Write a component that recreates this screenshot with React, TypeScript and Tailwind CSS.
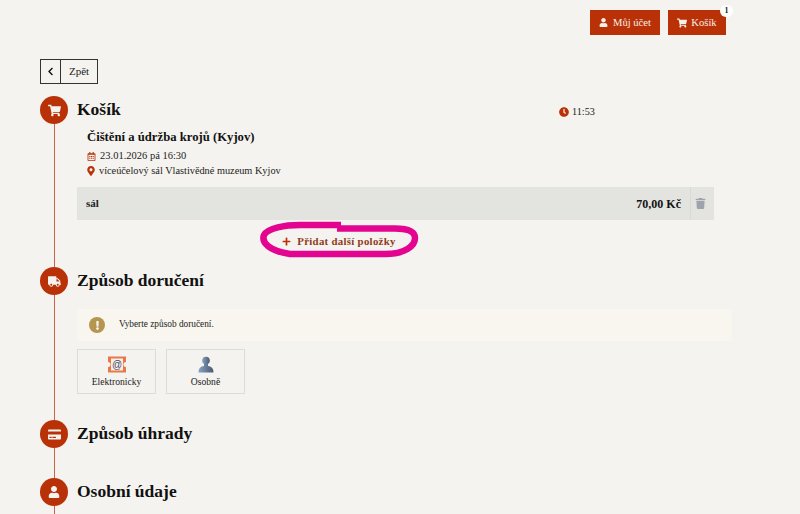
import React from "react";
import { FaUser, FaShoppingCart, FaChevronLeft, FaClock, FaRegCalendarAlt, FaMapMarkerAlt, FaTrash, FaPlus, FaTruck, FaCreditCard, FaExclamation } from "react-icons/fa";

const serif = "font-['Liberation_Serif',serif]";

function Circle({ children }: { children: React.ReactNode }) {
  return (
    <div className="flex h-[28px] w-[28px] shrink-0 items-center justify-center rounded-full bg-[#b93207] text-[#f5f3ef]">
      {children}
    </div>
  );
}

function Step({ icon, title, height, children }: { icon: React.ReactNode; title: string; height: string; children?: React.ReactNode }) {
  return (
    <section className={`flex gap-[9px] ${height}`}>
      <div className="flex w-[28px] shrink-0 flex-col items-center">
        <Circle>{icon}</Circle>
        <div className="w-px flex-1 bg-[#c8644a]" />
      </div>
      <div className="min-w-0 flex-1">
        <h2 className="h-[28px] text-[17.5px] font-bold leading-[27px] text-[#111]">{title}</h2>
        {children}
      </div>
    </section>
  );
}

function Choice({ label, icon }: { label: string; icon: React.ReactNode }) {
  return (
    <div className="flex h-[45px] w-[79px] flex-col items-center border border-[#dcdcd8] pt-[6px]">
      <div className="h-[17px]">{icon}</div>
      <div className="mt-[3px] text-[9.6px] leading-[12px] text-[#222]">{label}</div>
    </div>
  );
}

export default function App() {
  return (
    <div className={`relative h-[514px] w-[800px] overflow-hidden bg-[#f5f3ef] ${serif} text-[#222]`}>
      <header className="flex justify-end gap-[8px] pr-[74px] pt-[10px]">
        <button className="flex h-[25px] w-[70px] items-center justify-center gap-[5px] bg-[#b93207] text-[10.6px] text-[#f8efe8]">
          <FaUser size={9} /> Můj účet
        </button>
        <button className="relative flex h-[25px] w-[58px] items-center justify-center gap-[4px] bg-[#b93207] text-[10.6px] text-[#f8efe8]">
          <FaShoppingCart size={10} /> Košík
          <span className="absolute -right-[7px] -top-[5px] flex h-[12px] w-[13px] items-center justify-center rounded-full bg-white text-[8px] font-bold text-[#222]">1</span>
        </button>
      </header>

      <main className="pl-[40px] pt-[24px]">
        <div className="flex h-[25px] w-[58px] border border-[#333] text-[11px]">
          <div className="flex w-[20px] items-center justify-center border-r border-[#333]">
            <FaChevronLeft size={9} className="text-[#111]" />
          </div>
          <div className="flex flex-1 items-center justify-center">Zpět</div>
        </div>

        <div className="mt-[12px] w-[692px]">
          <Step icon={<FaShoppingCart size={13} />} title="Košík" height="h-[171px]">
            <div className="relative">
              <div className="absolute -top-[24px] left-[482px] flex items-center gap-[3px] text-[10.2px] leading-[14px]">
                <FaClock size={10} className="text-[#b93207]" /> 11:53
              </div>
              <h3 className="ml-[10px] mt-[5px] text-[12.7px] font-bold leading-[16px] text-[#111]">Čištění a údržba krojů (Kyjov)</h3>
              <div className="ml-[10px] mt-[4px] flex items-center gap-[4px] text-[10.5px] leading-[14px]">
                <FaRegCalendarAlt size={9} className="text-[#b93207]" /> 23.01.2026 pá 16:30
              </div>
              <div className="ml-[9px] mt-px flex items-center gap-[3px] text-[10.3px] leading-[14px]">
                <FaMapMarkerAlt size={10} className="text-[#b93207]" /> víceúčelový sál Vlastivědné muzeum Kyjov
              </div>
              <div className="mt-[9px] flex h-[33px] w-[637px] items-center bg-[#e3e3e0] pl-[9px] text-[11px] font-bold">
                <span className="flex-1">sál</span>
                <span className="text-[12px] text-[#111]">70,00 Kč</span>
                <span className="ml-[9px] flex h-full w-[24px] items-center justify-center border-l border-[#d9d9d5] pr-[4px]">
                  <FaTrash size={11} className="text-[#a0a3ab]" />
                </span>
              </div>
              <div className="mt-[13px] flex w-[524px] items-center justify-center gap-[6px] text-[10.8px] font-bold tracking-[0.3px] text-[#8f3b1b]">
                <FaPlus size={9} className="text-[#b93207]" /> Přidat další položky
              </div>
            </div>
          </Step>

          <Step icon={<FaTruck size={13} />} title="Způsob doručení" height="h-[153px]">
            <div className="mt-[14px] flex h-[32px] w-[655px] items-center bg-[#f8f6ee] pl-[12px] text-[9.3px]">
              <span className="flex h-[16px] w-[16px] items-center justify-center rounded-full bg-[#b59650] text-[#f5f3ef]">
                <FaExclamation size={9} />
              </span>
              <span className="ml-[14px]">Vyberte způsob doručení.</span>
            </div>
            <div className="mt-[8px] flex gap-[10px]">
              <Choice
                label="Elektronicky"
                icon={
                  <svg width="20" height="17" viewBox="0 0 20 17">
                    <path d="M1 0.5H19V6a2.5 2.5 0 0 0 0 5v5.500H1V11a2.500 2.500 0 0 0 0-5z" fill="#e8784a" />
                    <rect x="4" y="2.5" width="12" height="12" fill="#fbeee2" />
                    <text x="10" y="12" textAnchor="middle" fontSize="10" fill="#3a4a78" fontFamily="Liberation Sans">@</text>
                  </svg>
                }
              />
              <Choice
                label="Osobně"
                icon={
                  <svg width="18" height="17" viewBox="0 0 18 17">
                    <defs>
                      <linearGradient id="p" x1="0" x2="1">
                        <stop offset="0" stopColor="#86a4c4" />
                        <stop offset="1" stopColor="#4c5770" />
                      </linearGradient>
                    </defs>
                    <circle cx="9" cy="4.5" r="3.8" fill="url(#p)" />
                    <path d="M7 7.5h4v2.500c3 .6 5.500 1.600 5.500 6.500H1.500c0-4.900 2.500-5.900 5.500-6.500z" fill="url(#p)" />
                  </svg>
                }
              />
            </div>
          </Step>

          <Step icon={<FaCreditCard size={13} />} title="Způsob úhrady" height="h-[58px]" />
          <Step icon={<FaUser size={12} />} title="Osobní údaje" height="h-[50px]" />
        </div>
      </main>

      <svg className="pointer-events-none absolute left-[255px] top-[216px]" width="170" height="48" viewBox="255 216 170 48" fill="none">
        <path
          d="M341 225 H300 C285 225 268 228 264 235 C261 243 270 251 290 254 H385 C405 254 415 246 415 238 C415 231 408 228.500 395 228.500 H337"
          stroke="#e3058f"
          strokeWidth="6.500"
          strokeLinejoin="round"
        />
      </svg>
    </div>
  );
}
